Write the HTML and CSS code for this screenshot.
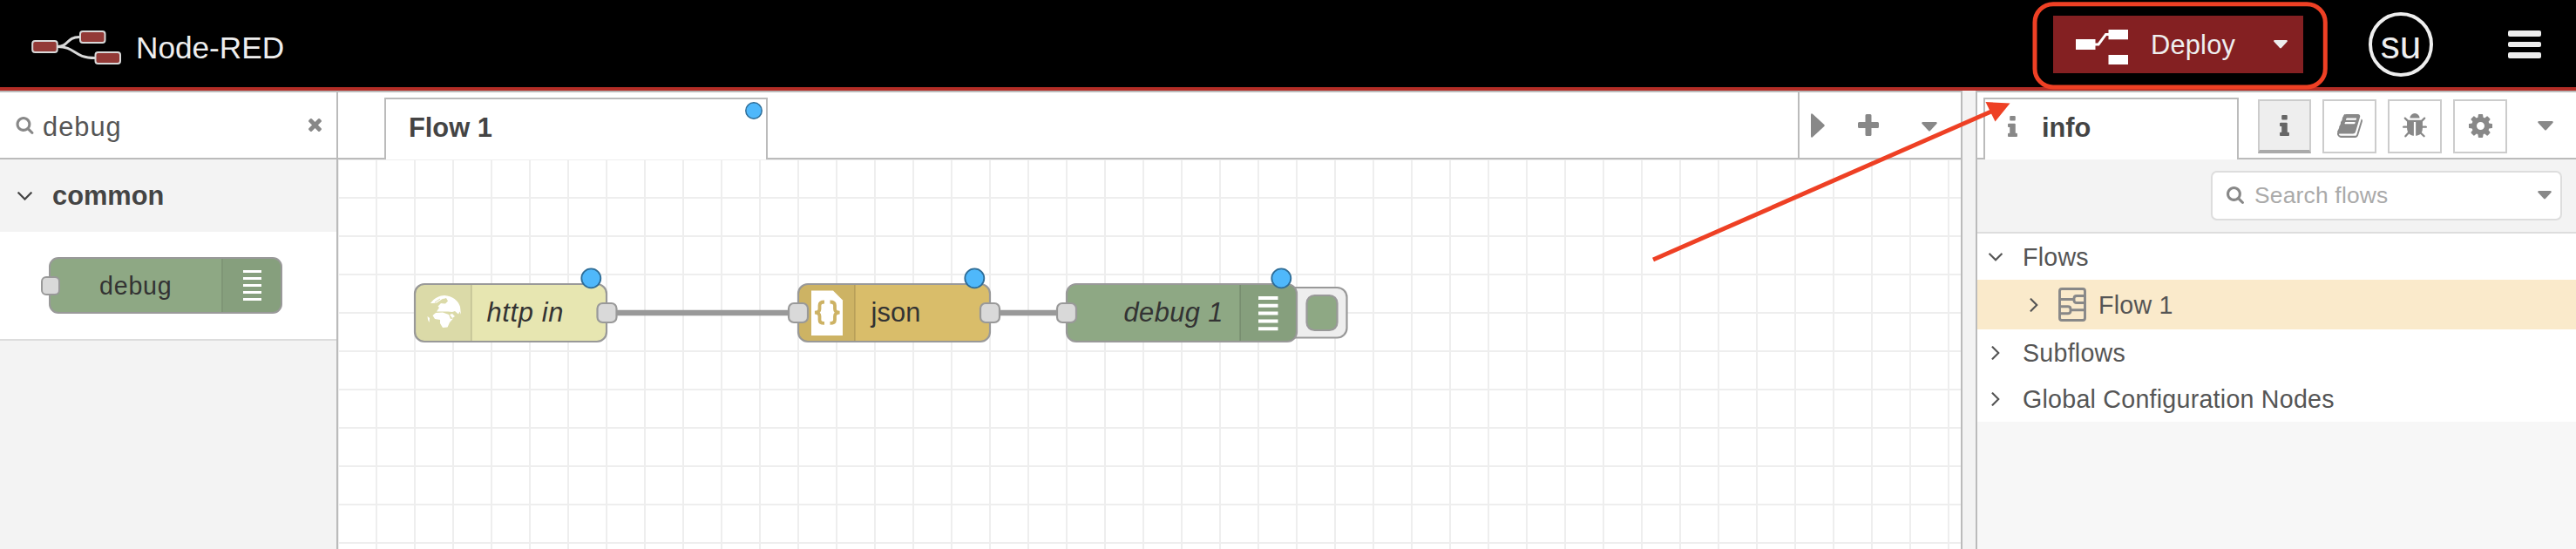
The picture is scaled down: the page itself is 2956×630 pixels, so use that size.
FILE: index.html
```html
<!DOCTYPE html>
<html lang="en">
<head>
<meta charset="utf-8">
<title>Node-RED</title>
<link rel="stylesheet" href="styles.css">
</head>
<body>
<svg width="0" height="0" class="defs" aria-hidden="true">
  <symbol id="search" viewBox="64 128 1664 1664"><path d="M1216 832q0-185-131.5-316.5t-316.5-131.5-316.5 131.5-131.5 316.5 131.5 316.5 316.5 131.5 316.5-131.5 131.5-316.5zm512 832q0 52-38 90t-90 38q-54 0-90-38l-343-342q-179 124-399 124-143 0-273.5-55.5t-225-150-150-225-55.5-273.5 55.5-273.5 150-225 225-150 273.5-55.5 273.5 55.5 225 150 150 225 55.5 273.5q0 220-124 399l343 343q37 37 37 90z"/></symbol>
  <symbol id="times" viewBox="302 366 1188 1188"><path d="M1490 1322q0 40-28 68l-136 136q-28 28-68 28t-68-28l-294-294-294 294q-28 28-68 28t-68-28l-136-136q-28-28-28-68t28-68l294-294-294-294q-28-28-28-68t28-68l136-136q28-28 68-28t68 28l294 294 294-294q28-28 68-28t68 28l136 136q28 28 28 68t-28 68l-294 294 294 294q28 28 28 68z"/></symbol>
  <symbol id="angle" viewBox="397 653 998 582"><path d="M1395 736q0 13-10 23l-466 466q-10 10-23 10t-23-10l-466-466q-10-10-10-23t10-23l50-50q10-10 23-10t23 10l393 393 393-393q10-10 23-10t23 10l50 50q10 10 10 23z"/></symbol>
  <symbol id="info" viewBox="576 128 640 1408"><path d="M1216 1344v128q0 26-19 45t-45 19h-512q-26 0-45-19t-19-45v-128q0-26 19-45t45-19h64v-384h-64q-26 0-45-19t-19-45v-128q0-26 19-45t45-19h384q26 0 45 19t19 45v576h64q26 0 45 19t19 45zm-128-1152v192q0 26-19 45t-45 19h-256q-26 0-45-19t-19-45v-192q0-26 19-45t45-19h256q26 0 45 19t19 45z"/></symbol>
  <symbol id="book" viewBox="64 128 1664 1536"><path d="M1703 478q40 57 18 129l-275 906q-19 64-76.5 107.5t-122.5 43.5h-923q-77 0-148.5-53.5t-99.5-131.5q-24-67-2-127 0-4 3-27t4-37q1-8-3-21.5t-3-19.5q2-11 8-21t16.5-23.5 16.5-23.5q23-38 45-91.5t30-91.5q3-10 .5-30t-.5-28q3-11 17-28t17-23q21-36 42-92t25-90q1-9-2.5-32t.5-28q4-13 22-30.5t22-22.5q19-26 42.5-84.5t27.5-96.5q1-8-3-25.5t-2-26.5q2-8 9-18t18-23 17-21q8-12 16.5-30.5t15-35 16-36 19.5-32 26.5-23.5 36-11.5 47.5 5.5l-1 3q38-9 51-9h761q74 0 114 56t18 130l-274 906q-36 119-71.5 153.5t-128.5 34.5h-869q-27 0-38 15-11 16-1 43 24 70 144 70h923q29 0 56-15.5t35-41.5l300-987q7-22 5-57 38 15 59 43zm-1064 2q-4 13 2 22.5t20 9.5h608q13 0 25.5-9.5t16.5-22.5l21-64q4-13-2-22.5t-20-9.5h-608q-13 0-25.5 9.5t-16.5 22.5zm-83 256q-4 13 2 22.5t20 9.5h608q13 0 25.5-9.5t16.5-22.5l21-64q4-13-2-22.5t-20-9.5h-608q-13 0-25.5 9.5t-16.5 22.5z"/></symbol>
  <symbol id="bug" viewBox="96 64 1600 1600"><path d="M1696 960q0 26-19 45t-45 19h-224q0 171-67 290l208 209q19 19 19 45t-19 45q-18 19-45 19t-45-19l-198-197q-5 5-15 13t-42 28.5-65 36.5-82 29-97 13v-896h-128v896q-51 0-101.5-13.5t-87-33-66-39-43.5-32.5l-15-14-183 207q-20 21-48 21-24 0-43-16-19-18-20.5-44.5t15.5-46.5l202-227q-58-114-58-274h-224q-26 0-45-19t-19-45 19-45 45-19h224v-294l-173-173q-19-19-19-45t19-45 45-19 45 19l173 173h844l173-173q19-19 45-19t45 19 19 45-19 45l-173 173v294h224q26 0 45 19t19 45zm-480-576h-640q0-133 93.5-226.5t226.5-93.5 226.5 93.5 93.5 226.5z"/></symbol>
  <symbol id="cog" viewBox="128 128 1536 1536"><path d="M1152 896q0-106-75-181t-181-75-181 75-75 181 75 181 181 75 181-75 75-181zm512-109v222q0 12-8 23t-20 13l-185 28q-19 54-39 91 35 50 107 138 10 12 10 25t-9 23q-27 37-99 108t-94 71q-12 0-26-9l-138-108q-44 23-91 38-16 136-29 186-7 28-36 28h-222q-14 0-24.5-8.5t-11.5-21.5l-28-184q-49-16-90-37l-141 107q-10 9-25 9-14 0-25-11-126-114-165-168-7-10-7-23 0-12 8-23 15-21 51-66.5t54-70.5q-27-50-41-99l-183-27q-13-2-21-12.5t-8-23.5v-222q0-12 8-23t19-13l186-28q14-46 39-92-40-57-107-138-10-12-10-24 0-10 9-23 26-36 98.5-107.5t94.5-71.5q13 0 26 10l138 107q44-23 91-38 16-136 29-186 7-28 36-28h222q14 0 24.5 8.5t11.5 21.5l28 184q49 16 90 37l142-107q9-9 24-9 13 0 25 10 129 119 165 170 7 8 7 22 0 12-8 23-15 21-51 66.5t-54 70.5q26 50 41 98l183 28q13 2 21 12.5t8 23.5z"/></symbol>
  <symbol id="caret" viewBox="0 0 18 11"><path d="M1.200 0h15.600q1.600.600.600 2L10 10q-1 1-2 0L.600 2Q-.400.600 1.200 0z"/></symbol>
</svg>

<header class="header">
  <div class="brand">
    <svg class="logo" width="105" height="41" viewBox="0 0 105 41">
      <g fill="none" stroke="#d9d9d9" stroke-width="3"><path d="M30 19.500C43 19.500 40 8.500 55 8.500"/><path d="M30 19.500C51 19.500 48 32.500 73 32.500"/></g>
      <g fill="#933a37" stroke="#d9d9d9" stroke-width="2"><rect x="1.200" y="13" width="28.500" height="13" rx="3"/><rect x="56" y="2" width="28.500" height="13" rx="3"/><rect x="73.500" y="26" width="28.500" height="13" rx="3"/></g>
    </svg>
    <span class="brand-name">Node-RED</span>
  </div>
  <div class="actions">
    <div class="deploy">
      <svg width="60" height="40" viewBox="0 0 60 40"><g fill="#fff"><rect y="11" width="22.500" height="12"/><rect x="37.500" width="22.500" height="11.300"/><rect x="37.500" y="29" width="22.500" height="11"/></g><path d="M22 17h4l8.500-11.600H38" fill="none" stroke="#fff" stroke-width="3"/></svg>
      <span class="deploy-label">Deploy</span>
      <svg class="caret light" width="18" height="10"><use href="#caret"/></svg>
    </div>
    <div class="user">su</div>
    <div class="menu"><i></i><i></i><i></i></div>
  </div>
</header>

<main class="main">
  <aside class="palette">
    <div class="palette-search">
      <svg class="grey" width="21" height="20"><use href="#search"/></svg>
      <span class="palette-query">debug</span>
      <svg class="grey clear" width="15" height="15"><use href="#times"/></svg>
    </div>
    <div class="category"><svg class="dark" width="17" height="10"><use href="#angle"/></svg><span>common</span></div>
    <div class="category-body">
      <div class="pnode">
        <i class="pport"></i>
        <span class="pnode-label">debug</span>
        <span class="pnode-icon"><i></i><i></i><i></i><i></i><i></i></span>
      </div>
    </div>
  </aside>

  <section class="workspace">
    <div class="tabbar">
      <div class="tab flow-tab"><span>Flow 1</span><svg class="tab-dot" width="20" height="20"><circle cx="10" cy="10" r="9.200" fill="#4fb8fb" stroke="#2f6d97" stroke-width="1.500"/></svg></div>
      <div class="tab-tools">
        <svg class="grey" width="16" height="28" viewBox="0 0 16 28"><path d="M0 1.500Q.5-.5 2 .8L15.300 13q.9 1 0 2L2 27.200Q.500 28.500 0 26.500z"/></svg>
        <svg class="grey plus" width="24" height="25" viewBox="0 0 24 25"><path d="M8.500 1.500q0-1.500 1.500-1.500h4q1.500 0 1.500 1.500V9h7q1.500 0 1.500 1.500v4q0 1.500-1.500 1.500h-7v7.500q0 1.500-1.500 1.500h-4q-1.500 0-1.500-1.500V16h-7Q0 16 0 14.500v-4Q0 9 1.500 9h7z"/></svg>
        <svg class="grey tools-caret" width="18" height="11"><use href="#caret"/></svg>
      </div>
    </div>
    <svg class="canvas" width="1862" height="447" viewBox="388 183 1862 447">
      <defs>
        <pattern id="grid" x="366" y="161" width="44" height="44" patternUnits="userSpaceOnUse"><path d="M22 0v44M0 22h44" stroke="#eee" stroke-width="2"/></pattern>
      </defs>
      <rect x="388" y="183" width="1862" height="447" fill="url(#grid)"/>
      <g class="wires"><path d="M696 359H916"/><path d="M1136 359h88"/></g>

      <g class="node">
        <rect class="box" x="476" y="326" width="220" height="66" rx="11" fill="#e7e6b1"/>
        <path class="shade" d="M541 327v64H487q-10 0-10-10V337q0-10 10-10z"/>
        <path class="divider" d="M541 327v64"/>
        <g fill="#fff">
          <path d="M494 348C498 342 505 339 510 339C519 339.500 526 345 528 352L529 361L527.500 357.500L526 360.500L522 357L519 358L514 357.500H501L504 353L502.500 351.500L506 348L511 348.500L514 345.500L512 342L507 343.500L501 347.500L496 348z"/>
          <path d="M500 359L508 358.500L515 361L517 366L520 365.500L516 370L513.500 375.500L508 376L505 371V367L499 366L496.500 362z"/>
          <path d="M519 360l3 3-3 2-3-4zM490.500 363l2.500 2-.500 5q-2-3-2-7z"/>
        </g>
        <path d="M499 347l6-4M505 346l4-3" stroke="#dcdba9" stroke-width="1"/>
        <text class="italic" x="558.500" y="369" textLength="88">http in</text>
        <rect class="port" x="685.500" y="348" width="22" height="22" rx="6"/>
        <circle class="changed" cx="678.300" cy="319.300" r="11"/>
      </g>

      <g class="node">
        <rect class="box" x="916" y="326" width="220" height="66" rx="11" fill="#d9bd6a"/>
        <path class="shade" d="M981 327v64H927q-10 0-10-10V337q0-10 10-10z"/>
        <path class="divider" d="M981 327v64"/>
        <path d="M931 333.500h25l11 11V385h-36z" fill="#fff"/>
        <g fill="none" stroke="#cdb264" stroke-width="3.800"><path d="M946 346.500q-5.500 0-5.500 4v4q0 4-5.500 4.200q5.500.200 5.500 4.200v4q0 4 5.500 4"/><path d="M952.500 346.500q5.500 0 5.500 4v4q0 4 5.500 4.200q-5.500.200-5.500 4.200v4q0 4-5.500 4"/></g>
        <text x="999.500" y="369" textLength="57">json</text>
        <rect class="port" x="905" y="348" width="22" height="22" rx="6"/>
        <rect class="port" x="1125" y="348" width="22" height="22" rx="6"/>
        <circle class="changed" cx="1118.300" cy="319.300" r="11"/>
      </g>

      <g class="node">
        <rect class="box" x="1460" y="330" width="85.500" height="57.500" rx="11" fill="#eee"/>
        <rect class="box" x="1499.500" y="339" width="35" height="40" rx="9" fill="#8ea884"/>
        <rect class="box" x="1224" y="326" width="264" height="66" rx="11" fill="#8ea884"/>
        <path class="shade" d="M1423 327v64h54q10 0 10-10V337q0-10-10-10z"/>
        <path class="divider" d="M1423 327v64"/>
        <path d="M1444 342h22.500M1444 350.800h22.500M1444 359.600h22.500M1444 368.400h22.500M1444 377.200h22.500" stroke="#fff" stroke-width="4"/>
        <text class="italic" x="1289.500" y="369" textLength="114">debug 1</text>
        <rect class="port" x="1213" y="348" width="22" height="22" rx="6"/>
        <circle class="changed" cx="1470.300" cy="319.300" r="11"/>
      </g>
    </svg>
  </section>

  <div class="separator"></div>

  <aside class="sidebar">
    <div class="tabbar">
      <div class="tab info-tab"><svg class="grey" width="11" height="24"><use href="#info"/></svg><span>info</span></div>
      <div class="side-buttons">
        <span class="side-btn active"><svg width="11" height="24"><use href="#info"/></svg></span>
        <span class="side-btn"><svg width="29" height="27"><use href="#book"/></svg></span>
        <span class="side-btn"><svg width="28" height="28"><use href="#bug"/></svg></span>
        <span class="side-btn"><svg width="27" height="27"><use href="#cog"/></svg></span>
        <svg class="grey side-caret" width="18" height="11"><use href="#caret"/></svg>
      </div>
    </div>
    <div class="side-toolbar">
      <div class="side-search">
        <svg class="grey" width="20" height="20"><use href="#search"/></svg>
        <span>Search flows</span>
        <svg class="grey" width="16" height="10"><use href="#caret"/></svg>
      </div>
    </div>
    <div class="tree">
      <div class="row"><svg class="chev" width="16" height="10"><use href="#angle"/></svg><span>Flows</span></div>
      <div class="row selected">
        <svg class="chev right" width="16" height="10"><use href="#angle"/></svg>
        <svg class="flow-icon" width="32" height="39" viewBox="0 0 32 39" fill="none" stroke="#888" stroke-width="2.900"><rect x="1.500" y="1.500" width="29" height="36" rx="2.500"/><path d="M1 13.500h17M31 9.500H21q-3 0-3 3v2q0 3 3 3h10M31 25.700H14M1 21.700h10q3 0 3 3v2q0 3-3 3H1"/></svg>
        <span>Flow 1</span>
      </div>
      <div class="row"><svg class="chev right" width="16" height="10"><use href="#angle"/></svg><span>Subflows</span></div>
      <div class="row"><svg class="chev right" width="16" height="10"><use href="#angle"/></svg><span>Global Configuration Nodes</span></div>
    </div>
  </aside>
</main>

<svg class="annotation" width="2956" height="630" viewBox="0 0 2956 630">
  <rect x="2335" y="4.700" width="333.300" height="95.300" rx="21" fill="none" stroke="#ee4024" stroke-width="5"/>
  <path d="M1897 298L2286 127.500" stroke="#ee4024" stroke-width="5"/>
  <path d="M2306.500 118.500L2278.500 117L2289.500 139.500z" fill="#ee4024"/>
</svg>
</body>
</html>
```

FILE: styles.css
```css
* { box-sizing: border-box; }
body {
  margin: 0;
  width: 2956px;
  height: 630px;
  overflow: hidden;
  position: relative;
  display: flex;
  flex-direction: column;
  background: #fff;
  color: #555;
  font-family: "Liberation Sans", Arial, Helvetica, sans-serif;
  font-size: 30.8px;
}
svg { display: block; flex: none; }
.defs, .annotation { position: absolute; left: 0; top: 0; }
.grey { fill: #888; }
.dark { fill: #444; }
.light { fill: #eee; }

.header {
  height: 104px;
  flex: none;
  display: flex;
  justify-content: space-between;
  background: #000;
  border-bottom: 4px solid #b32d26;
  color: #eee;
}
.brand { display: flex; align-items: center; gap: 14px; padding: 9px 0 0 36px; }
.brand-name { font-size: 35.2px; padding-left: 1px; }
.actions { display: flex; align-items: center; padding: 2px 40px 0 0; }
.deploy {
  display: flex;
  align-items: center;
  width: 287px;
  height: 66px;
  padding: 0 17px 0 26px;
  background: #842022;
}
.deploy svg:first-child { margin-top: 6px; }
.deploy-label { margin-left: 26px; padding-top: 1px; letter-spacing: .2px; }
.deploy .caret { margin-left: auto; }
.user {
  width: 74px;
  height: 74px;
  margin-left: 75px;
  border: 4px solid #eee;
  border-radius: 50%;
  display: flex;
  align-items: center;
  justify-content: center;
  padding-top: 1px;
  font-size: 44px;
}
.menu { width: 38px; margin-left: 86px; display: flex; flex-direction: column; gap: 6px; }
.menu i { height: 6.700px; background: #eee; border-radius: 2px; }

.main { flex: 1; display: flex; min-height: 0; }
.palette {
  width: 388px;
  flex: none;
  background: #f3f3f3;
  border-top: 2px solid #bbb;
  border-right: 2px solid #bbb;
}
.palette-search {
  height: 77px;
  display: flex;
  align-items: center;
  padding: 0 17px 0 18px;
  background: #fff;
  border-bottom: 2px solid #bbb;
}
.palette-query { padding: 4px 0 0 10px; letter-spacing: 1px; }
.clear { margin-left: auto; }
.category {
  height: 83px;
  display: flex;
  align-items: center;
  gap: 23px;
  padding-left: 20px;
  color: #444;
  font-weight: bold;
}
.category-body {
  height: 125px;
  padding: 29px 0 0 56px;
  background: #fff;
  border-bottom: 2px solid #ddd;
}
.pnode {
  position: relative;
  display: flex;
  width: 268px;
  height: 65px;
  background: #8ea884;
  border: 2px solid #999;
  border-radius: 11px;
  color: #333;
  font-size: 28.6px;
}
.pport {
  position: absolute;
  left: -11px;
  top: 20px;
  width: 22px;
  height: 22px;
  background: #d9d9d9;
  border: 2px solid #999;
  border-radius: 6px;
}
.pnode-label { flex: 1; display: flex; align-items: center; padding: 2px 0 0 56px; letter-spacing: .8px; }
.pnode-icon {
  width: 68px;
  display: flex;
  flex-direction: column;
  justify-content: center;
  gap: 5px;
  padding-left: 23px;
  background: rgba(0, 0, 0, .05);
  border-left: 2px solid rgba(0, 0, 0, .06);
  border-radius: 0 9px 9px 0;
}
.pnode-icon i { width: 21px; height: 3px; background: #fff; }

.workspace { width: 1864px; flex: none; border-right: 2px solid #bbb; border-top: 2px solid #bbb; }
.tabbar { height: 77px; display: flex; border-bottom: 2px solid #bbb; background: #fff; }
.tab {
  display: flex;
  align-items: center;
  height: 71px;
  margin-top: 6px;
  padding-bottom: 3px;
  background: #fff;
  border: 2px solid #bbb;
  border-bottom: 0;
  color: #444;
  font-weight: bold;
}
.flow-tab { position: relative; width: 440px; margin-left: 53px; padding-left: 26px; }
.tab-dot { position: absolute; right: 4px; top: 3px; }
.tab-tools {
  display: flex;
  align-items: center;
  width: 187px;
  margin-left: auto;
  padding-left: 13px;
  border-left: 2px solid #bbb;
}
.plus { margin-left: 38px; }
.tools-caret { margin: 4px 0 0 49px; }
.canvas text { font-size: 30.8px; fill: #333; }
.canvas .italic { font-style: italic; }
.box { stroke: #999; stroke-width: 2.200px; }
.port { fill: #d9d9d9; stroke: #999; stroke-width: 2.200px; }
.shade { fill: rgba(0, 0, 0, .05); }
.divider { stroke: rgba(0, 0, 0, .1); stroke-width: 2px; }
.wires { stroke: #999; stroke-width: 6.600px; }
.changed { fill: #4fb8fb; stroke: #2f6d97; stroke-width: 1.800px; }

.separator { width: 15px; flex: none; background: #f3f3f3; }

.sidebar {
  flex: 1;
  display: flex;
  flex-direction: column;
  background: #f7f7f7;
  border-left: 2px solid #bbb;
  border-top: 2px solid #bbb;
}
.sidebar .tabbar { flex: none; }
.info-tab { width: 293px; margin-left: 7px; padding-left: 26px; gap: 28px; }
.info-tab svg { margin-top: -4px; }
.side-buttons { display: flex; gap: 13px; margin: 8px 0 0 22px; }
.side-btn {
  width: 62px;
  height: 62px;
  display: flex;
  align-items: center;
  justify-content: center;
  padding-bottom: 2px;
  border: 2px solid #ccc;
  background: #fff;
  fill: #888;
}
.side-btn.active { width: 61px; background: #eee; border-bottom: 4px solid #aaa; fill: #666; padding-bottom: 0; }
.side-caret { margin: 25px 0 0 22px; }
.side-toolbar {
  height: 85px;
  flex: none;
  display: flex;
  justify-content: flex-end;
  padding: 13px 16px 0 0;
  background: #f3f3f3;
  border-bottom: 2px solid #ddd;
}
.side-search {
  width: 403px;
  height: 57px;
  display: flex;
  align-items: center;
  padding: 0 10px 1px 16px;
  background: #fff;
  border: 2px solid #ddd;
  border-radius: 7px;
  color: #aaa;
  font-size: 26.4px;
}
.side-search span { flex: 1; padding-left: 12px; letter-spacing: .2px; }
.tree { background: #fff; font-size: 28.6px; letter-spacing: .25px; }
.row { height: 53px; display: flex; align-items: center; padding-left: 13px; }
.row.selected { height: 57px; padding-left: 57px; background: #faeacb; }
.row span { padding: 1px 0 0 23px; }
.row.selected span { padding-left: 14px; }
.chev { fill: #555; }
.right { transform: rotate(-90deg); }
.flow-icon { margin-left: 20px; }
```
